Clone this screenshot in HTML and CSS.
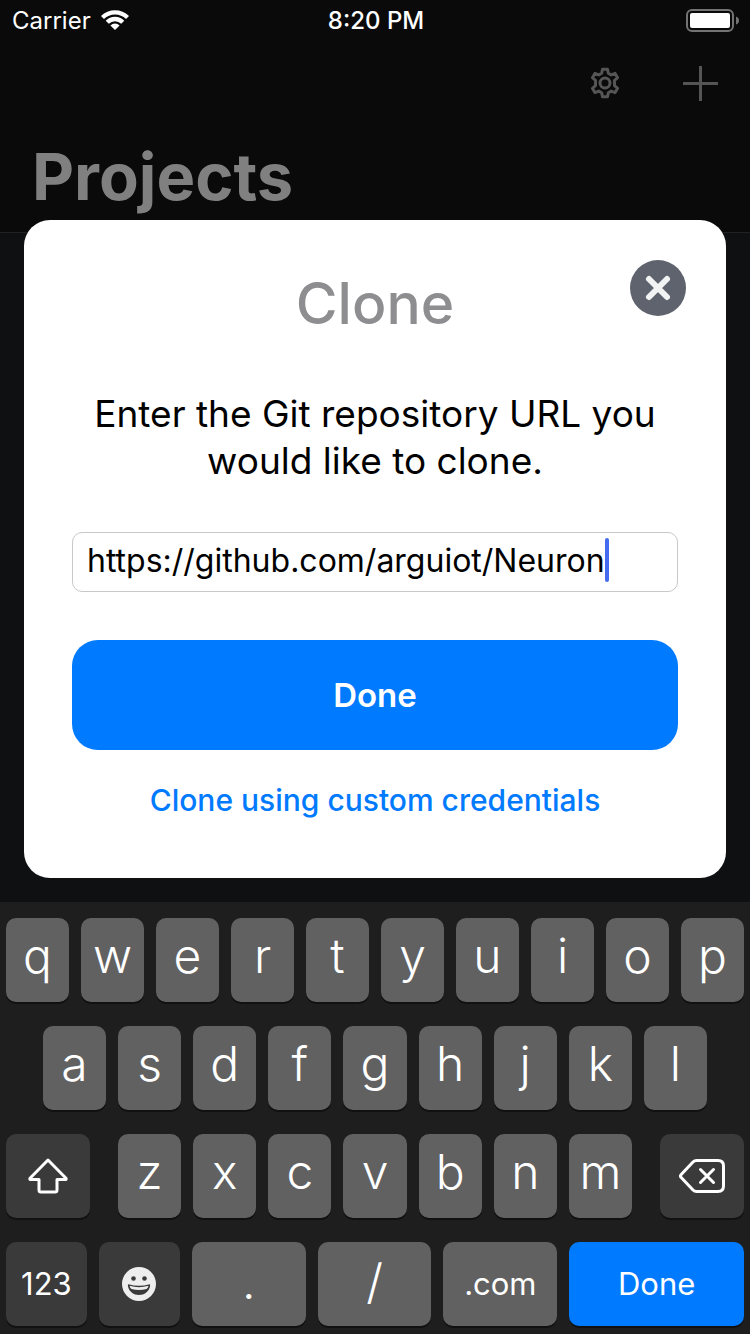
FILE: index.html
```html
<!DOCTYPE html>
<html lang="en">
<head>
<meta charset="utf-8">
<meta name="viewport" content="width=device-width, initial-scale=1">
<title>Projects</title>
<link rel="stylesheet" href="styles.css">
</head>
<body>
<div class="screen">
  <div class="stage">
    <header class="header">
      <div class="status">
        <div class="status-left">
          <span>Carrier</span>
          <svg class="wifi" viewBox="0 0 28 20" aria-hidden="true">
            <path d="M0 6A20 20 0 0 1 28 6L25 9A15.600 15.600 0 0 0 3 9Z"/>
            <path d="M4.700 10.700A13.200 13.200 0 0 1 23.300 10.700L20.200 13.800A8.800 8.800 0 0 0 7.800 13.800Z"/>
            <path d="M9.400 15.400A6.500 6.500 0 0 1 18.600 15.400L14 20Z"/>
          </svg>
        </div>
        <time class="clock">8:20 PM</time>
        <svg class="battery" viewBox="0 0 54 24" aria-hidden="true">
          <rect x="1" y="2" width="46" height="21" rx="5" fill="none" stroke="#737373" stroke-width="2"/>
          <rect x="4" y="5" width="40" height="15" rx="2" fill="#fff"/>
          <path d="M50 8.500Q53 9.500 53 12.500T50 16.500Z" fill="#737373"/>
        </svg>
      </div>
      <nav class="toolbar">
        <button class="tool" type="button" aria-label="Settings">
          <svg class="gear" viewBox="0 0 30 32" aria-hidden="true">
            <path d="M12.500 2.200h5l.8 4 2.900 1.700 3.900-1.500 2.500 4.300-3.100 2.700v5.200l3.100 2.700-2.500 4.300-3.900-1.500-2.900 1.700-.8 4h-5l-.8-4-2.900-1.700-3.900 1.500-2.500-4.300 3.100-2.700v-5.200l-3.100-2.700 2.500-4.300 3.900 1.500 2.900-1.700Z"/>
            <circle cx="15" cy="16" r="5"/>
          </svg>
        </button>
        <button class="tool" type="button" aria-label="Add project">
          <svg class="plus" viewBox="0 0 35 35" aria-hidden="true"><path d="M17.500 0v35M0 17.500h35"/></svg>
        </button>
      </nav>
      <h1 class="page-title">Projects</h1>
    </header>

    <section class="dialog" role="dialog" aria-labelledby="dialog-title">
      <button class="close" type="button" aria-label="Close">
        <svg viewBox="0 0 56 56" aria-hidden="true"><path d="M19 19l18 18M37 19L19 37"/></svg>
      </button>
      <h2 class="dialog-title" id="dialog-title">Clone</h2>
      <label class="prompt" for="url">Enter the Git repository URL you would like to clone.</label>
      <div class="field">
        <input class="url" id="url" type="text" value="https://github.com/arguiot/Neuron" spellcheck="false">
        <span class="caret"></span>
      </div>
      <button class="submit" type="button">Done</button>
      <a class="link" href="#credentials">Clone using custom credentials</a>
    </section>
  </div>

  <div class="keyboard">
    <div class="row">
      <button class="key">q</button><button class="key">w</button><button class="key">e</button><button class="key">r</button><button class="key">t</button><button class="key">y</button><button class="key">u</button><button class="key">i</button><button class="key">o</button><button class="key">p</button>
    </div>
    <div class="row row-home">
      <button class="key">a</button><button class="key">s</button><button class="key">d</button><button class="key">f</button><button class="key">g</button><button class="key">h</button><button class="key">j</button><button class="key">k</button><button class="key">l</button>
    </div>
    <div class="row row-shift">
      <button class="key dark side" aria-label="Shift">
        <svg class="shift" viewBox="0 0 40 36" aria-hidden="true"><path d="M20 2L38 20.300Q38.600 21.600 37 21.600H29V32Q29 34 27 34H13Q11 34 11 32V21.600H3Q1.400 21.600 2 20.300Z"/></svg>
      </button>
      <div class="letters">
        <button class="key">z</button><button class="key">x</button><button class="key">c</button><button class="key">v</button><button class="key">b</button><button class="key">n</button><button class="key">m</button>
      </div>
      <button class="key dark side" aria-label="Delete">
        <svg class="delete" viewBox="0 0 46 34" aria-hidden="true"><path d="M17.500 1.500H39Q44.500 1.500 44.500 7V27Q44.500 32.500 39 32.500H17.500Q15.500 32.500 14 31L2.200 18.500Q.800 17 2.200 15.500L14 3Q15.500 1.500 17.500 1.500Z"/><path d="M21.500 10.500l13 13M34.500 10.500l-13 13"/></svg>
      </button>
    </div>
    <div class="row">
      <button class="key dark label small">123</button>
      <button class="key dark small" aria-label="Emoji">
        <svg class="emoji" viewBox="0 0 34 34" aria-hidden="true">
          <circle cx="17" cy="17" r="17" fill="#eee"/>
          <circle cx="11.500" cy="11.500" r="2.300" fill="#3a3a3a"/>
          <circle cx="22.500" cy="11.500" r="2.300" fill="#3a3a3a"/>
          <path d="M6.500 17.200Q17 20.500 27.500 17.200Q28.500 17.200 28 19.500C26.500 25 22.500 28 17 28S7.500 25 6 19.500Q5.500 17.200 6.500 17.200Z" fill="#3a3a3a"/>
          <path d="M7.500 18.800Q17 21.500 26.500 18.800Q26 21 24.500 22Q17 24 9.500 22Q8 21 7.500 18.800Z" fill="#eee"/>
        </svg>
      </button>
      <button class="key wide">.</button>
      <button class="key wide">/</button>
      <button class="key wide label">.com</button>
      <button class="key label done">Done</button>
    </div>
  </div>
</div>
</body>
</html>
```
FILE: styles.css
```css
* {
  box-sizing: border-box;
}

body {
  margin: 0;
  background: #0f1012;
  color: #fff;
  font-family: Inter, "Liberation Sans", sans-serif;
}

button {
  margin: 0;
  padding: 0;
  border: 0;
  background: none;
  color: inherit;
  font: inherit;
  cursor: pointer;
}

svg {
  display: block;
}

.screen {
  display: flex;
  flex-direction: column;
  min-height: 100vh;
}

.stage {
  display: grid;
  flex: 1;
}

.header,
.dialog {
  grid-area: 1 / 1;
}

.header {
  align-self: start;
  padding-bottom: 14px;
  border-bottom: 1px solid #222224;
  background: #0a0a0a;
}

.status {
  display: grid;
  grid-template-columns: 1fr auto 1fr;
  align-items: center;
  height: 40px;
  padding: 0 10px 0 12px;
  font-size: 24px;
}

.status-left {
  display: flex;
  align-items: center;
  gap: 10px;
}

.wifi {
  width: 28px;
  height: 20px;
  fill: #fff;
}

.clock {
  font-weight: 500;
}

.battery {
  justify-self: end;
  width: 54px;
  height: 24px;
}

.toolbar {
  display: flex;
  align-items: center;
  justify-content: flex-end;
  gap: 63px;
  height: 86px;
  padding: 0 32px;
}

.gear {
  width: 30px;
  height: 32px;
  fill: none;
  stroke: #555;
  stroke-width: 3;
  stroke-linejoin: round;
}

.plus {
  width: 35px;
  height: 35px;
  fill: none;
  stroke: #555;
  stroke-width: 3;
}

.page-title {
  margin: 0;
  padding: 10px 32px 0;
  color: #808080;
  font-size: 65px;
  font-weight: 700;
  line-height: 82px;
}

.dialog {
  position: relative;
  display: flex;
  flex-direction: column;
  align-self: end;
  margin: 220px 24px 24px;
  padding: 48px 48px 58px;
  border-radius: 26px;
  background: #fff;
  color: #000;
}

.close {
  position: absolute;
  top: 40px;
  right: 40px;
  width: 56px;
  height: 56px;
  border-radius: 50%;
  background: #5f636e;
}

.close svg {
  fill: none;
  stroke: #f2f3f3;
  stroke-width: 6;
  stroke-linecap: round;
}

.dialog-title {
  margin: 0 0 50px;
  color: #8e8e90;
  font-size: 57px;
  font-weight: 500;
  line-height: 72px;
  text-align: center;
}

.prompt {
  margin-bottom: 48px;
  font-size: 37px;
  line-height: 47px;
  text-align: center;
}

.field {
  display: flex;
  align-items: center;
  height: 60px;
  margin-bottom: 48px;
  padding: 0 14px 4px;
  border: 1px solid #c8c8ca;
  border-radius: 10px;
}

.url {
  field-sizing: content;
  max-width: 100%;
  height: 54px;
  padding: 0;
  border: 0;
  outline: 0;
  background: none;
  color: #000;
  caret-color: transparent;
  font-family: inherit;
  font-size: 32px;
}

.caret {
  width: 4px;
  height: 44px;
  border-radius: 2px;
  background: #456cf0;
}

.submit {
  height: 110px;
  margin-bottom: 30px;
  border-radius: 26px;
  background: #007aff;
  color: #fff;
  font-size: 33px;
  font-weight: 600;
}

.link {
  color: #007aff;
  font-size: 30px;
  font-weight: 500;
  line-height: 40px;
  text-align: center;
  text-decoration: none;
}

.keyboard {
  display: flex;
  flex-direction: column;
  gap: 24px;
  padding: 16px 6px 8px;
  background: #1e1e1e;
}

.row,
.letters {
  display: flex;
  gap: 12px;
}

.row-home {
  padding: 0 37px;
}

.row-shift {
  gap: 28px;
}

.letters {
  flex: 1;
}

.key {
  display: flex;
  flex: 1 1 0;
  align-items: center;
  justify-content: center;
  min-width: 0;
  height: 84px;
  padding-bottom: 10px;
  border-radius: 10px;
  background: #616161;
  box-shadow: 0 2px 0 #111;
  font-size: 48px;
  font-weight: 350;
}

.dark {
  padding-bottom: 0;
  background: #3a3a3a;
}

.side {
  flex: 0 0 84px;
}

.small {
  flex-grow: 81;
}

.wide {
  flex-grow: 114;
  padding-bottom: 6px;
}

.label {
  padding-bottom: 2px;
  font-size: 31px;
  font-weight: 400;
}

.done {
  flex-grow: 175;
  background: #007aff;
}

.shift {
  width: 40px;
  height: 36px;
}

.delete {
  width: 46px;
  height: 34px;
}

.shift,
.delete {
  fill: none;
  stroke: #fff;
  stroke-width: 3;
  stroke-linecap: round;
  stroke-linejoin: round;
}

.emoji {
  width: 34px;
  height: 34px;
}
```
